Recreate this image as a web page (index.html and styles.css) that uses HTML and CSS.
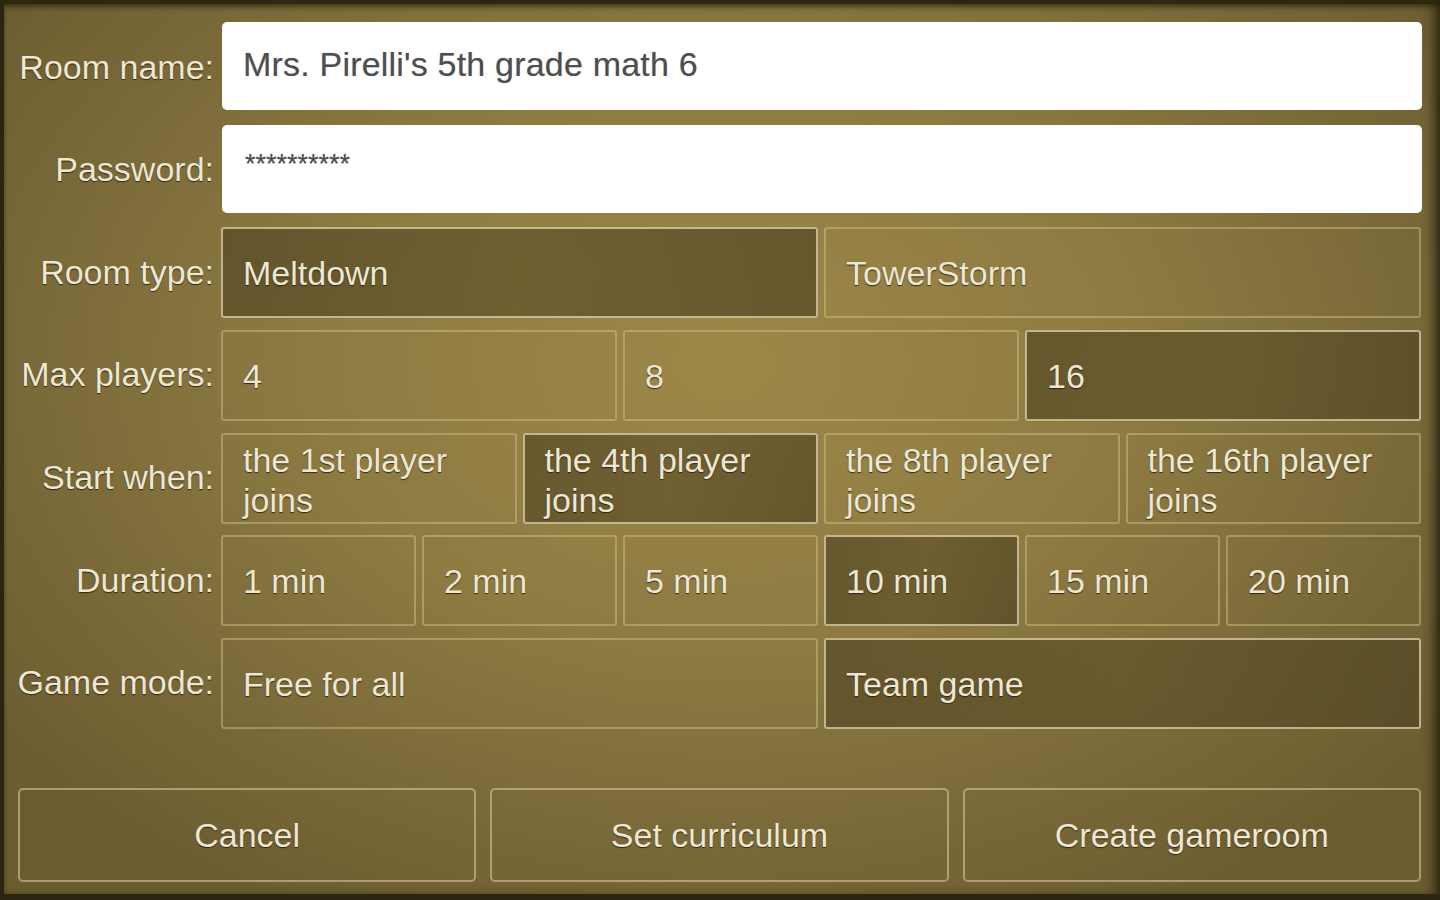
FILE: index.html
```html
<!DOCTYPE html>
<html>
<head>
<meta charset="utf-8">
<title>Create gameroom</title>
<link rel="stylesheet" href="styles.css">
</head>
<body>
<div class="panel">
  <div class="form">
    <div class="label">Room name:</div>
    <div class="field">Mrs. Pirelli's 5th grade math 6</div>

    <div class="label">Password:</div>
    <div class="field pw">**********</div>

    <div class="label">Room type:</div>
    <div class="options">
      <div class="opt sel">Meltdown</div>
      <div class="opt">TowerStorm</div>
    </div>

    <div class="label">Max players:</div>
    <div class="options">
      <div class="opt">4</div>
      <div class="opt">8</div>
      <div class="opt sel">16</div>
    </div>

    <div class="label">Start when:</div>
    <div class="options">
      <div class="opt two">the 1st player joins</div>
      <div class="opt two sel">the 4th player joins</div>
      <div class="opt two">the 8th player joins</div>
      <div class="opt two">the 16th player joins</div>
    </div>

    <div class="label">Duration:</div>
    <div class="options">
      <div class="opt">1 min</div>
      <div class="opt">2 min</div>
      <div class="opt">5 min</div>
      <div class="opt sel">10 min</div>
      <div class="opt">15 min</div>
      <div class="opt">20 min</div>
    </div>

    <div class="label">Game mode:</div>
    <div class="options">
      <div class="opt">Free for all</div>
      <div class="opt sel">Team game</div>
    </div>
  </div>

  <div class="actions">
    <div class="btn">Cancel</div>
    <div class="btn">Set curriculum</div>
    <div class="btn">Create gameroom</div>
  </div>
</div>
</body>
</html>
```

FILE: styles.css
```css
html, body {
  margin: 0;
  padding: 0;
  background: #2a2410;
}

.panel {
  box-sizing: border-box;
  width: 1440px;
  height: 900px;
  border-top: 4px solid #2d2711;
  border-left: 4px solid #2a2410;
  border-bottom: 6px solid #2c2611;
  background: radial-gradient(ellipse 900px 620px at 720px 360px, #9d8849 0%, #8e7b42 45%, #786838 80%, #6c5d31 100%);
  box-shadow: inset -10px 0 12px -4px rgba(30, 25, 8, 0.75), inset 0 3px 4px rgba(30, 25, 8, 0.5);
  font-family: "Liberation Sans", Arial, Helvetica, sans-serif;
  color: #ede7d4;
  text-shadow: 0 1px 1px rgba(35, 28, 8, 0.85);
}

.form {
  display: grid;
  grid-template-columns: 196px 1fr;
  grid-auto-rows: 91px;
  column-gap: 7px;
  row-gap: 11.67px;
  padding: 18px 19px 0 14px;
}

.label {
  font-size: 34px;
  text-align: right;
  display: flex;
  align-items: center;
  justify-content: flex-end;
  white-space: nowrap;
  padding-bottom: 1px;
}

.field {
  height: 88px;
  box-sizing: border-box;
  background: #ffffff;
  border-radius: 5px;
  margin-left: 1px;
  margin-right: -1px;
  padding: 0 21px;
  display: flex;
  align-items: center;
  font-size: 34px;
  letter-spacing: 0.2px;
  color: #4e4e4e;
  text-shadow: 0 0 1px rgba(80, 80, 80, 0.4);
  padding-bottom: 4px;
}

.field.pw {
  font-size: 27px;
  letter-spacing: 0;
  align-items: flex-start;
  padding-top: 24px;
  padding-left: 23px;
}

.options {
  display: flex;
  gap: 6px;
}

.opt {
  flex: 1;
  box-sizing: border-box;
  border: 2px solid rgba(215, 198, 140, 0.45);
  border-radius: 3px;
  padding: 2px 20px 0 20px;
  display: flex;
  align-items: center;
  font-size: 34px;
}

.opt.two {
  line-height: 40px;
  padding-top: 4px;
  padding-bottom: 0;
}

.opt.sel {
  border-color: rgba(232, 222, 185, 0.7);
  background: linear-gradient(100deg, rgba(86, 72, 37, 0.72) 0%, rgba(92, 78, 40, 0.66) 50%, rgba(84, 71, 36, 0.74) 100%);
}

.actions {
  display: flex;
  gap: 14px;
  margin-top: 59px;
  padding: 0 19px 0 14px;
}

.btn {
  flex: 1;
  height: 94px;
  box-sizing: border-box;
  border: 2px solid rgba(222, 208, 160, 0.55);
  border-radius: 5px;
  display: flex;
  align-items: center;
  justify-content: center;
  font-size: 34px;
  padding-top: 2px;
}
```
